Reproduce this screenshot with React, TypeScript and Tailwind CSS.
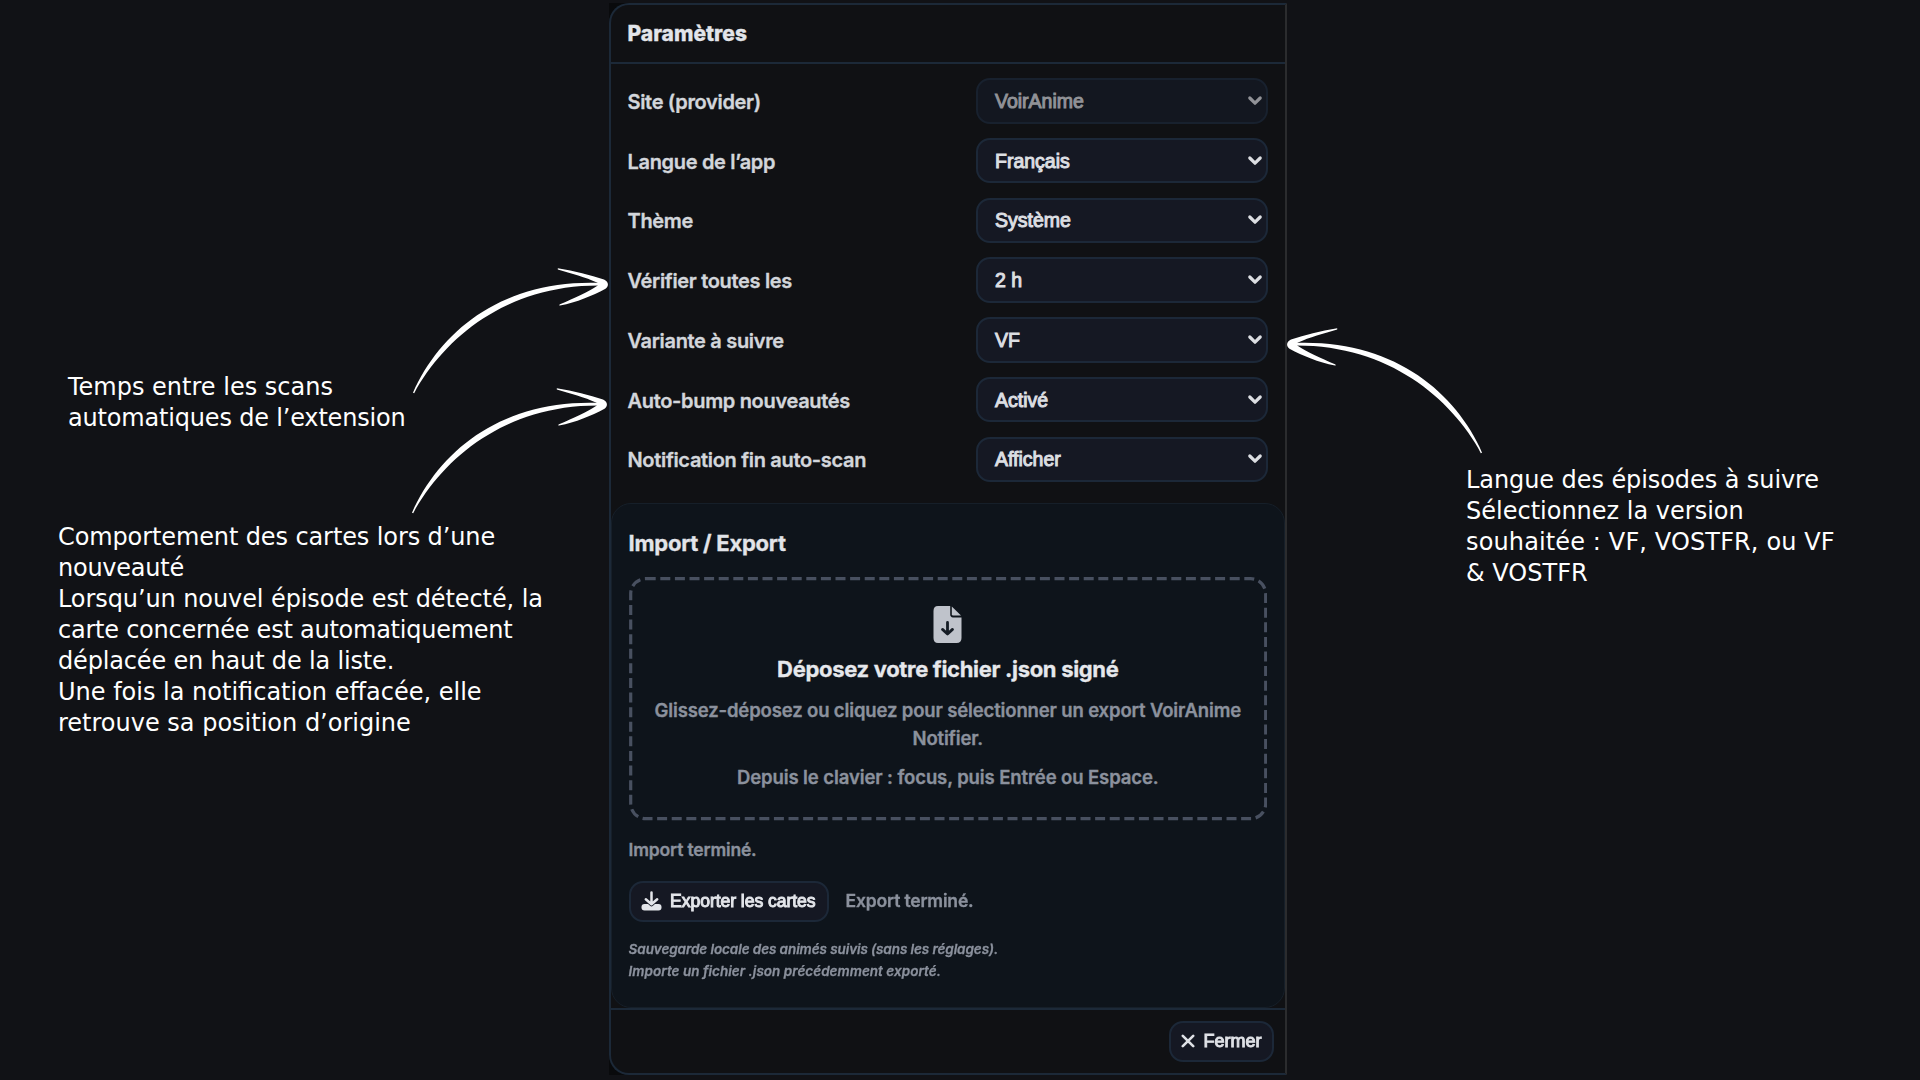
import React from "react";

type Setting = { label: string; value: string; disabled?: boolean };

const settings: Setting[] = [
  { label: "Site (provider)", value: "VoirAnime", disabled: true },
  { label: "Langue de l’app", value: "Français" },
  { label: "Thème", value: "Système" },
  { label: "Vérifier toutes les", value: "2 h" },
  { label: "Variante à suivre", value: "VF" },
  { label: "Auto-bump nouveautés", value: "Activé" },
  { label: "Notification fin auto-scan", value: "Afficher" },
];

function Chevron() {
  return (
    <svg width="16" height="12" viewBox="0 0 16 12" fill="none">
      <path d="M2.8 3 L8 8.2 L13.2 3" stroke="currentColor" strokeWidth="3.2" strokeLinecap="round" strokeLinejoin="round" />
    </svg>
  );
}

function SettingRow({ label, value, disabled }: Setting) {
  return (
    <div className="flex h-[45.5px] items-center justify-between">
      <span className="pt-[2px] text-[20px] font-semibold leading-6 tracking-[-0.32px] text-[#d3d6db] [-webkit-text-stroke:0.35px_currentColor]">
        {label}
      </span>
      <div
        className={
          disabled
            ? "flex h-full w-[292px] items-center justify-between rounded-[14px] border-2 border-[#18212e] bg-[#131720] pl-[17px] pr-[3px] text-[#919297]"
            : "flex h-full w-[292px] items-center justify-between rounded-[14px] border-2 border-[#1c2838] bg-[#151823] pl-[17px] pr-[3px] text-[#dcdee2]"
        }
      >
        <span className="font-['Liberation_Sans',sans-serif] text-[19.5px] leading-6 [-webkit-text-stroke:1px_currentColor]">
          {value}
        </span>
        <Chevron />
      </div>
    </div>
  );
}

/* Hand-drawn arrow pointing right, with a tapered tail. */
function Arrow({ className }: { className: string }) {
  return (
    <svg className={className} width="198" height="128" viewBox="412 266 198 128" fill="#fff">
      <path d="M413 392.8 C440.8 330.7 502.8 279 601 283 L601 285.6 C507.2 284.6 445.2 337.3 414.2 393.2 Z" />
      <path d="M557.8 268.2 C575 271 590 275 604 279.4 C608.8 281.6 609.2 286.2 605.5 288.7 C592 296 577 302 560 305.6 C559 305.6 559 304.6 560 304.2 C575 298 588 292 597 286 L599 284 L597 282.6 C586 277.5 571 273.5 557.8 269.6 Z" />
    </svg>
  );
}

function FileIcon() {
  return (
    <svg width="29" height="37" viewBox="0 0 29 37" className="mx-auto block">
      <path d="M5 0 H17.2 V8.6 Q17.2 11.4 20 11.4 H28.5 V32 Q28.5 37 23.5 37 H5 Q.5 37 .5 32 V5 Q.5 0 5 0 Z" fill="#bfc3cb" />
      <path d="M18.8 .6 L28 9.6 H20.2 Q18.8 9.6 18.8 8.2 Z" fill="#bfc3cb" />
      <path d="M14.5 16.5 V27.5 M9.5 23.4 L14.5 28 L19.5 23.4" fill="none" stroke="#151c25" strokeWidth="2.8" strokeLinecap="round" strokeLinejoin="round" />
    </svg>
  );
}

function DownloadIcon() {
  return (
    <svg width="21" height="20" viewBox="0 0 21 20" fill="none">
      <rect x="0.5" y="13" width="20" height="6.6" rx="3" fill="#e3e5ea" />
      <path d="M10.5 1.5 V12.4 M4.8 8.2 L10.5 13.2 L16.2 8.2" stroke="#151823" strokeWidth="4.4" strokeLinecap="round" strokeLinejoin="round" />
      <path d="M10.5 1.5 V12.4 M4.8 8.2 L10.5 13.2 L16.2 8.2" stroke="#e3e5ea" strokeWidth="2.5" strokeLinecap="round" strokeLinejoin="round" />
    </svg>
  );
}

function ImportExport() {
  return (
    <section className="h-[504.5px] rounded-[20px] border border-[#161f29] bg-[#0e141b] pl-[16.6px] pr-[17px] pt-[24.5px]">
      <h2 className="text-[22px] font-bold leading-7 tracking-[-0.25px] text-[#e2e4e9] [-webkit-text-stroke:0.3px_currentColor]">
        Import / Export
      </h2>
      <div className="relative mt-[20.5px] h-[243.5px] pt-[28.5px] text-center">
        <svg className="absolute inset-0 h-full w-full" fill="none">
          <rect x="1.7" y="1.7" width="635" height="240" rx="15" stroke="#485060" strokeWidth="3.2" strokeDasharray="10 4.6" />
        </svg>
        <FileIcon />
        <p className="mt-[12px] text-[22px] font-bold leading-7 tracking-[-0.32px] text-[#e6e8ec] [-webkit-text-stroke:0.3px_currentColor]">
          Déposez votre fichier .json signé
        </p>
        <p className="mt-[14.5px] text-[18.5px] font-semibold leading-[27.7px] tracking-[-0.14px] text-[#8b919d] [-webkit-text-stroke:0.35px_currentColor]">
          Glissez-déposez ou cliquez pour sélectionner un export VoirAnime
          <br />
          Notifier.
        </p>
        <p className="mt-[10.5px] text-[18.5px] font-semibold leading-7 tracking-[-0.1px] text-[#8b919d] [-webkit-text-stroke:0.35px_currentColor]">
          Depuis le clavier : focus, puis Entrée ou Espace.
        </p>
      </div>
      <p className="mt-[17.5px] text-[17.5px] font-semibold leading-6 tracking-[-0.17px] text-[#8b919d] [-webkit-text-stroke:0.35px_currentColor]">
        Import terminé.
      </p>
      <div className="mt-[18.5px] flex items-center gap-[17px]">
        <button className="flex h-[41px] w-[200px] items-center gap-[8px] rounded-[14px] border-2 border-[#1c2838] bg-[#151823] pl-[10.5px] text-[#e3e5ea]">
          <DownloadIcon />
          <span className="whitespace-nowrap font-['Liberation_Sans',sans-serif] text-[17.6px] leading-6 tracking-[-0.07px] [-webkit-text-stroke:1px_currentColor]">
            Exporter les cartes
          </span>
        </button>
        <span className="text-[17.5px] font-semibold leading-6 tracking-[-0.17px] text-[#8b919d] [-webkit-text-stroke:0.35px_currentColor]">
          Export terminé.
        </span>
      </div>
      <p className="mt-[16.5px] text-[13.5px] font-semibold italic leading-[22px] text-[#8b919d] [-webkit-text-stroke:0.3px_currentColor]">
        <span className="tracking-[-0.08px]">Sauvegarde locale des animés suivis (sans les réglages).</span>
        <br />
        <span className="tracking-[0.03px]">Importe un fichier .json précédemment exporté.</span>
      </p>
    </section>
  );
}

function SettingsPanel() {
  return (
    <main className="mt-[3px] h-[1072px] w-[678px] shrink-0 bg-[#090a0c]">
      <div className="flex h-full flex-col rounded-l-[20px] border-2 border-[#1c2938] border-r-[#2b2c2e] bg-[#101114] font-['Inter',sans-serif] blur-[0.4px]">
        <header className="flex h-[59px] items-center border-b-2 border-[#1c2938] pl-[16.5px]">
          <h1 className="text-[21px] font-extrabold leading-7 text-[#e2e5ea] [-webkit-text-stroke:0.3px_currentColor]">
            Paramètres
          </h1>
        </header>
        <div className="flex flex-col gap-[14.25px] pb-[21px] pl-[16.5px] pr-[17px] pt-[14px]">
          {settings.map((s) => (
            <SettingRow key={s.label} {...s} />
          ))}
        </div>
        <ImportExport />
        <footer className="flex flex-1 items-center justify-end border-t-2 border-[#1c2938] pr-[11.5px]">
          <button className="flex h-[41px] w-[105px] items-center rounded-[14px] border-2 border-[#1c2838] bg-[#151823] pl-[10.5px] text-[#dfe1e6]">
            <svg width="14" height="14" viewBox="0 0 14 14" fill="none">
              <path d="M1.8 1.8 L12.2 12.2 M12.2 1.8 L1.8 12.2" stroke="currentColor" strokeWidth="2.6" strokeLinecap="round" />
            </svg>
            <span className="ml-[8.5px] font-['Liberation_Sans',sans-serif] text-[18px] leading-6 [-webkit-text-stroke:1px_currentColor]">
              Fermer
            </span>
          </button>
        </footer>
      </div>
    </main>
  );
}

export default function App() {
  return (
    <div className="relative flex h-[1080px] w-[1920px] overflow-hidden bg-[#111216] font-['DejaVu_Sans',sans-serif] text-[24px] leading-[31px] text-white">
      <aside className="w-[609px] shrink-0 whitespace-nowrap pt-[371.5px]">
        <p className="pl-[68px]">
          <span>Temps entre les scans</span>
          <br />
          <span className="tracking-[-0.18px]">automatiques de l’extension</span>
        </p>
        <p className="pl-[58px] pt-[88px]">
          <span className="tracking-[-0.11px]">Comportement des cartes lors d’une</span>
          <br />
          <span className="tracking-[-0.25px]">nouveauté</span>
          <br />
          <span className="tracking-[-0.09px]">Lorsqu’un nouvel épisode est détecté, la</span>
          <br />
          <span className="tracking-[-0.24px]">carte concernée est automatiquement</span>
          <br />
          <span className="tracking-[-0.17px]">déplacée en haut de la liste.</span>
          <br />
          <span>Une fois la notification effacée, elle</span>
          <br />
          <span>retrouve sa position d’origine</span>
        </p>
      </aside>
      <SettingsPanel />
      <aside className="whitespace-nowrap pl-[179px] pt-[465px]">
        <span className="tracking-[-0.08px]">Langue des épisodes à suivre</span>
        <br />
        <span>Sélectionnez la version</span>
        <br />
        <span className="tracking-[0.13px]">souhaitée : VF, VOSTFR, ou VF</span>
        <br />
        <span>&amp; VOSTFR</span>
      </aside>
      <Arrow className="absolute left-[412px] top-[266px]" />
      <Arrow className="absolute left-[410.5px] top-[386px]" />
      <Arrow className="absolute left-[1285px] top-[326px] -scale-x-100" />
    </div>
  );
}
